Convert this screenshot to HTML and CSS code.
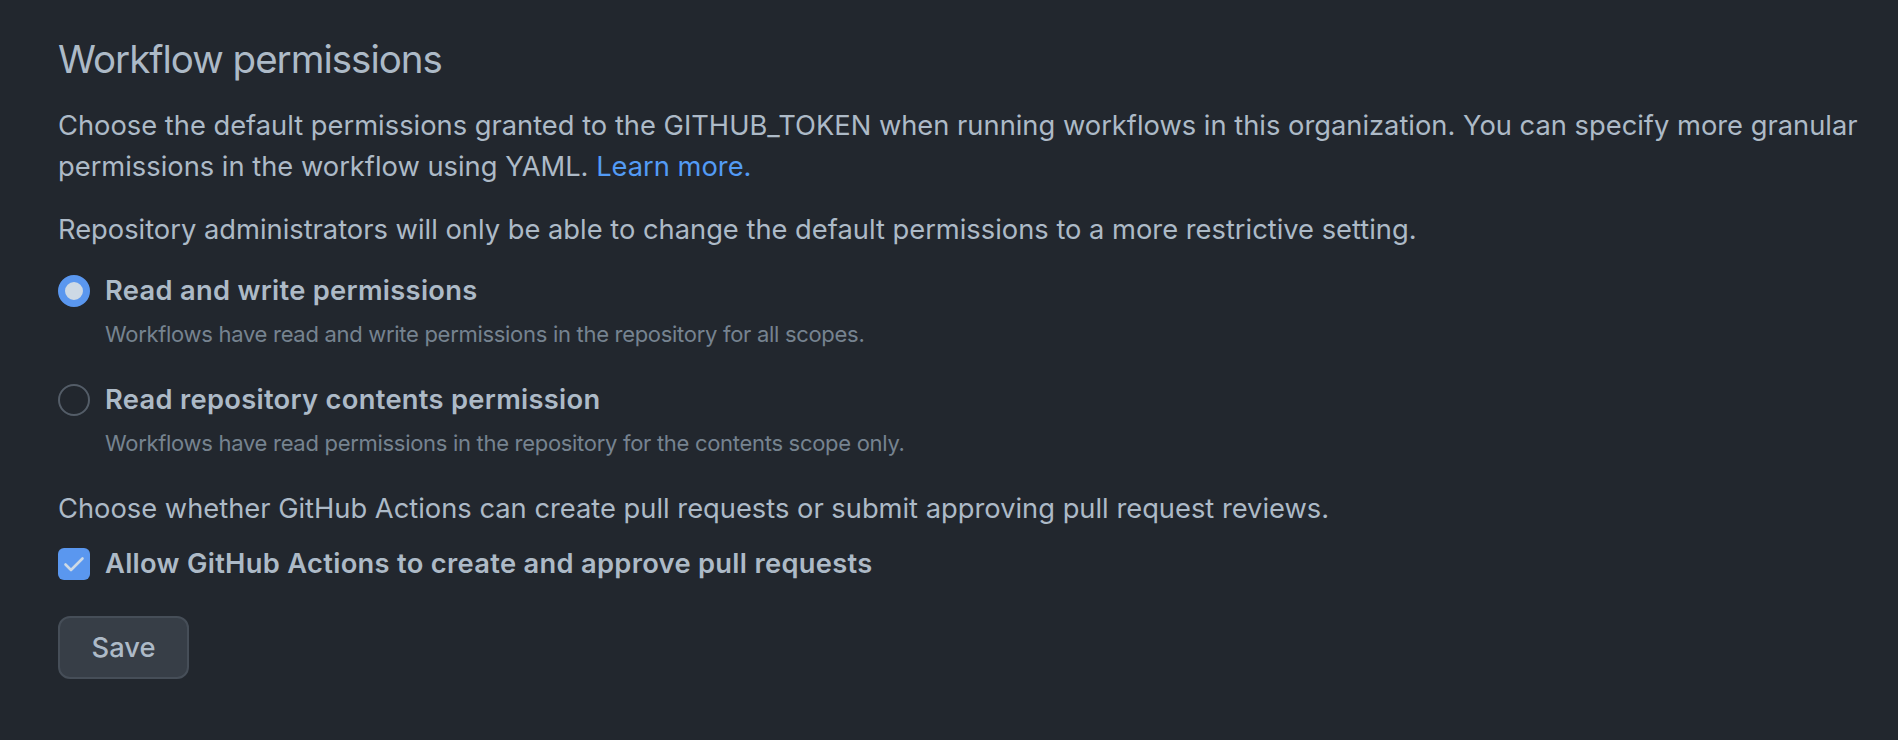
FILE: index.html
```html
<!DOCTYPE html>
<html lang="en">
<head>
<meta charset="utf-8">
<title>Workflow permissions</title>
<link rel="stylesheet" href="styles.css">
</head>
<body>
<main class="section">
  <h2 class="heading">Workflow permissions</h2>
  <p class="para para-intro">Choose the default permissions granted to the GITHUB_TOKEN when running workflows in this organization. You can specify more granular permissions in the workflow using YAML. <a class="link" href="#">Learn more.</a></p>
  <p class="para para-note">Repository administrators will only be able to change the default permissions to a more restrictive setting.</p>

  <div class="option option-first">
    <span class="radio radio-checked"></span>
    <div class="option-body">
      <div class="option-label">Read and write permissions</div>
      <div class="option-desc">Workflows have read and write permissions in the repository for all scopes.</div>
    </div>
  </div>

  <div class="option option-second">
    <span class="radio"></span>
    <div class="option-body">
      <div class="option-label">Read repository contents permission</div>
      <div class="option-desc">Workflows have read permissions in the repository for the contents scope only.</div>
    </div>
  </div>

  <p class="para para-pr">Choose whether GitHub Actions can create pull requests or submit approving pull request reviews.</p>

  <div class="option option-check">
    <span class="checkbox">
      <svg viewBox="0 0 32 32" width="32" height="32" aria-hidden="true"><path d="M7.5 16.5 L13 22 L24.5 10.5" fill="none" stroke="#cdd9e5" stroke-width="2.6" stroke-linecap="round" stroke-linejoin="round"/></svg>
    </span>
    <div class="option-body">
      <div class="option-label">Allow GitHub Actions to create and approve pull requests</div>
    </div>
  </div>

  <button class="btn" type="button">Save</button>
</main>
</body>
</html>
```

FILE: styles.css
```css
html, body {
  margin: 0;
  padding: 0;
  background: #22272e;
}

body {
  font-family: Inter, "Noto Sans", "Liberation Sans", sans-serif;
  color: #adbac7;
  height: 740px;
  overflow: hidden;
}

.section {
  padding: 30px 40px 0 58px;
}

.heading {
  margin: 0;
  font-size: 38.5px;
  line-height: 58px;
  font-weight: 400;
  letter-spacing: -1px;
  color: #adbac7;
}

.para {
  margin: 0;
  font-size: 27.3px;
  line-height: 41.5px;
  color: #adbac7;
}

.para-intro {
  margin-top: 16.5px;
}

.para-note {
  margin-top: 21.3px;
}

.link {
  color: #539bf5;
  text-decoration: none;
}

.option {
  display: flex;
  align-items: flex-start;
  gap: 15px;
}

.option-first {
  margin-top: 20px;
}

.option-second {
  margin-top: 27.6px;
}

.option-check {
  margin-top: 13.5px;
}

.radio,
.checkbox {
  flex: none;
  width: 32px;
  height: 32px;
  margin-top: 4.5px;
  box-sizing: border-box;
}

.radio {
  border-radius: 50%;
  border: 2px solid #545d68;
}

.radio-checked {
  border: 7px solid #5a97ef;
  background: #cdd9e5;
}

.checkbox {
  border-radius: 6px;
  background: #5a97ef;
  display: block;
}

.checkbox svg {
  display: block;
}

.option-label {
  font-size: 27.3px;
  line-height: 41.5px;
  font-weight: 600;
  letter-spacing: 0.3px;
  color: #adbac7;
}

.option-desc {
  margin-top: 5px;
  font-size: 22px;
  line-height: 35px;
  letter-spacing: -0.3px;
  color: #768390;
}

.para-pr {
  margin-top: 27.6px;
}

.btn {
  display: block;
  margin-top: 31px;
  height: 62.6px;
  width: 131px;
  padding: 0;
  box-sizing: border-box;
  font-family: Inter, "Noto Sans", "Liberation Sans", sans-serif;
  font-size: 27.3px;
  font-weight: 500;
  color: #adbac7;
  background: #373e47;
  border: 2px solid #464e58;
  border-radius: 12px;
}
```
